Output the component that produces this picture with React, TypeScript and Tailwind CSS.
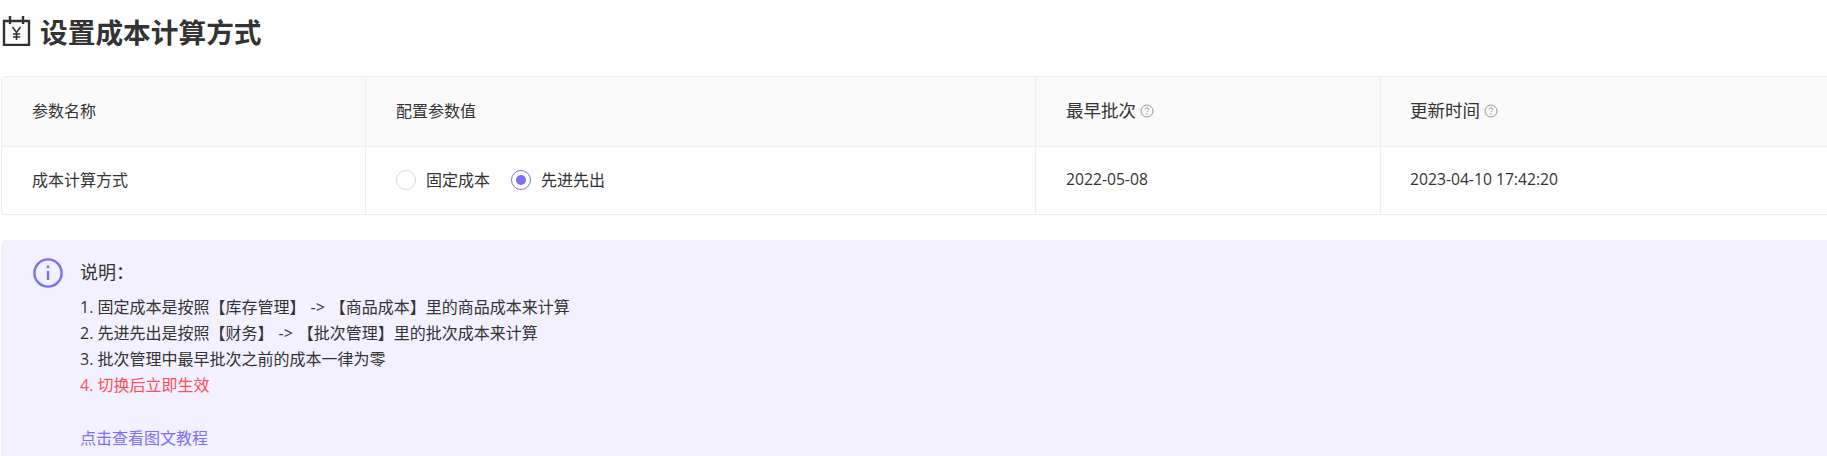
import React from "react";

const FONT = "font-['Open_Sans','Noto_Sans_CJK_SC',sans-serif]";

// little grey question mark next to some column titles
const HelpIcon = () => (
  <svg width="14" height="14" viewBox="0 0 14 14" fill="none" className="ml-[4px] shrink-0">
    <circle cx="7" cy="7" r="6" stroke="#9499a8" strokeWidth="1" />
    <path d="M5.3 5.6c0-1 .8-1.6 1.7-1.6s1.7.6 1.7 1.5c0 1.3-1.7 1.3-1.7 2.7" stroke="#9499a8" strokeWidth="1" />
    <circle cx="7" cy="10" r=".7" fill="#9499a8" />
  </svg>
);

const Radio = ({ label, checked }: { label: string; checked?: boolean }) => (
  <label className="flex items-center">
    <span
      className={`flex h-5 w-5 items-center justify-center rounded-full border bg-white ${
        checked ? "border-[#7c6ff7]" : "border-[#d9d9d9]"
      }`}
    >
      {checked && <span className="h-[10px] w-[10px] rounded-full bg-[#7c6ff7]" />}
    </span>
    <span className="ml-[10px] text-[16px] text-[#333]">{label}</span>
  </label>
);

const Arrow = () => <span className="mx-[5px]">-&gt;</span>;

const App = () => {
  return (
    <div className={`h-[456px] w-[1827px] overflow-hidden bg-white ${FONT}`}>
      {/* Title */}
      <div className="flex h-[76px] items-start pl-[2px] pt-[12px]">
        <svg width="29" height="32" viewBox="0 0 29 32" fill="none" className="mt-[2px]">
          <path d="M2 7h25v24H2z" stroke="#333" strokeWidth="2.4" fill="none" />
          <path d="M8 2v8M21 2v8" stroke="#333" strokeWidth="2.4" />
          <path d="M10.5 13l4 5.5 4-5.5M14.5 18.5V26M11 20h7M11 23h7" stroke="#333" strokeWidth="1.6" />
        </svg>
        <h1 className="ml-[9px] text-[27.7px] leading-[40px] font-bold text-[#333]">设置成本计算方式</h1>
      </div>

      {/* Params table */}
      <div className="ml-[1px] w-[1900px] rounded-[4px] border border-[#eeeeee] text-[#333]">
        <div className="flex h-[70px] border-b border-[#eeeeee] bg-[#fafafa]">
          <div className="flex w-[364px] items-center border-r border-[#eeeeee] pb-[2px] pl-[30px] text-[16px]">参数名称</div>
          <div className="flex w-[670px] items-center border-r border-[#eeeeee] pb-[2px] pl-[30px] text-[16px]">配置参数值</div>
          <div className="flex w-[345px] items-center border-r border-[#eeeeee] pb-[2px] pl-[30px] text-[17.5px]">
            最早批次
            <HelpIcon />
          </div>
          <div className="flex items-center pb-[2px] pl-[29px] text-[17.5px]">
            更新时间
            <HelpIcon />
          </div>
        </div>
        <div className="flex h-[67px]">
          <div className="flex w-[364px] items-center border-r border-[#eeeeee] pb-[2px] pl-[30px] text-[16px]">成本计算方式</div>
          <div className="flex w-[670px] items-center gap-[21px] border-r border-[#eeeeee] pb-[2px] pl-[30px]">
            <Radio label="固定成本" />
            <Radio label="先进先出" checked />
          </div>
          <div className="flex w-[345px] items-center border-r border-[#eeeeee] pb-[2px] pl-[30px] text-[15.7px]">2022-05-08</div>
          <div className="flex items-center pb-[2px] pl-[29px] text-[15.7px]">2023-04-10 17:42:20</div>
        </div>
      </div>

      {/* Notes */}
      <div className="mt-[25px] ml-[1px] flex h-[240px] w-[1900px] rounded-[6px] border border-[#f0edfc] bg-[#f3f0ff] pl-[31px] pt-[16px]">
        <svg width="30" height="30" viewBox="0 0 30 30" fill="none" className="mt-[1px] shrink-0">
          <circle cx="15" cy="15" r="13.6" stroke="#7c6ff7" strokeWidth="2.4" />
          <path d="M15 13v9" stroke="#7c6ff7" strokeWidth="2.4" />
          <circle cx="15" cy="8.8" r="1.5" fill="#7c6ff7" />
        </svg>
        <div className="ml-[17px] text-[16px] leading-[26px] text-[#333]">
          <div className="mb-[7px] h-[30px] text-[18px] leading-[30px]">说明：</div>
          <div>1. 固定成本是按照【库存管理】<Arrow />【商品成本】里的商品成本来计算</div>
          <div>2. 先进先出是按照【财务】<Arrow />【批次管理】里的批次成本来计算</div>
          <div>3. 批次管理中最早批次之前的成本一律为零</div>
          <div className="text-[#ff4d5a]">4. 切换后立即生效</div>
          <div className="mt-[27px] text-[#7c6ff7]">点击查看图文教程</div>
        </div>
      </div>
    </div>
  );
};

export default App;
